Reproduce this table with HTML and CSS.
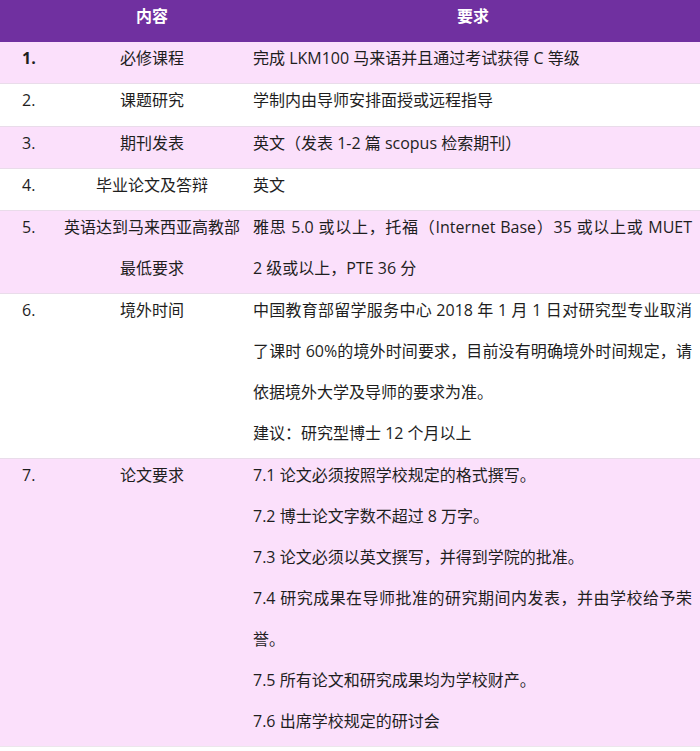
FILE: index.html
```html
<!DOCTYPE html>
<html lang="zh-CN">
<head>
<meta charset="utf-8">
<title>要求</title>
<link rel="stylesheet" href="styles.css">
</head>
<body>
<table class="req">
  <colgroup>
    <col class="c-num">
    <col class="c-item">
    <col class="c-desc">
  </colgroup>
  <thead>
    <tr class="head">
      <th></th>
      <th><div class="t">内容</div></th>
      <th><div class="t">要求</div></th>
    </tr>
  </thead>
  <tbody>
    <tr class="pink">
      <td class="num"><div class="t strong">1.</div></td>
      <td class="item"><div class="t">必修课程</div></td>
      <td class="desc"><div class="t">完成 LKM100 马来语并且通过考试获得 C 等级</div></td>
    </tr>
    <tr class="white">
      <td class="num"><div class="t">2.</div></td>
      <td class="item"><div class="t">课题研究</div></td>
      <td class="desc"><div class="t">学制内由导师安排面授或远程指导</div></td>
    </tr>
    <tr class="pink">
      <td class="num"><div class="t">3.</div></td>
      <td class="item"><div class="t">期刊发表</div></td>
      <td class="desc"><div class="t">英文（发表 1-2 篇 scopus 检索期刊）</div></td>
    </tr>
    <tr class="white">
      <td class="num"><div class="t">4.</div></td>
      <td class="item"><div class="t">毕业论文及答辩</div></td>
      <td class="desc"><div class="t">英文</div></td>
    </tr>
    <tr class="pink">
      <td class="num"><div class="t">5.</div></td>
      <td class="item"><div class="t">英语达到马来西亚高教部最低要求</div></td>
      <td class="desc"><div class="t">雅思 5.0 或以上，托福（Internet Base）35 或以上或 MUET <span class="nw">2 级</span>或以上，PTE 36 分</div></td>
    </tr>
    <tr class="white">
      <td class="num"><div class="t">6.</div></td>
      <td class="item"><div class="t">境外时间</div></td>
      <td class="desc"><div class="t">
        <p>中国教育部留学服务中心 2018 年 1 月 1 日对研究型专业取消了课时 60%的境外时间要求，目前没有明确境外时间规定，请依据境外大学及导师的要求为准。</p>
        <p>建议：研究型博士 12 个月以上</p>
      </div></td>
    </tr>
    <tr class="pink last">
      <td class="num"><div class="t">7.</div></td>
      <td class="item"><div class="t">论文要求</div></td>
      <td class="desc"><div class="t">
        <p>7.1 论文必须按照学校规定的格式撰写。</p>
        <p>7.2 博士论文字数不超过 8 万字。</p>
        <p>7.3 论文必须以英文撰写，并得到学院的批准。</p>
        <p>7.4 研究成果在导师批准的研究期间内发表，并由学校给予荣誉。</p>
        <p>7.5 所有论文和研究成果均为学校财产。</p>
        <p>7.6 出席学校规定的研讨会</p>
      </div></td>
    </tr>
  </tbody>
</table>
</body>
</html>
```
FILE: styles.css
```css
html, body {
  margin: 0;
  padding: 0;
  background: #ffffff;
}

body {
  font-family: "Open Sans", "Noto Sans CJK SC", sans-serif;
  font-size: 16px;
  color: #1e1e1e;
}

.req {
  width: 700px;
  border-collapse: collapse;
  table-layout: fixed;
}

.c-num { width: 58px; }
.c-item { width: 188px; }
.c-desc { width: 454px; }

.req th,
.req td {
  padding: 0;
  vertical-align: top;
  line-height: 41px;
}

.t {
  margin-top: -4px;
  padding-bottom: 4px;
}

.t p {
  margin: 0;
}

.nw {
  white-space: nowrap;
}

.head {
  background: #7030a0;
  color: #ffffff;
}

.head th {
  height: 42px;
  font-weight: 700;
  font-size: 16px;
  text-align: center;
  line-height: 42px;
}

.head .t {
  margin-top: -5px;
  padding-bottom: 5px;
}

.pink { background: #fbe0fb; }
.white { background: #ffffff; }

.req tbody tr {
  border-bottom: 1px solid #e9dcea;
}

.req tbody tr.last {
  border-bottom: 1px solid #ece6ec;
}

.req tbody tr:nth-child(2) td {
  height: 42px;
}

.num {
  padding-left: 22px !important;
}

.strong {
  font-weight: 700;
}

.item {
  text-align: center;
}

.desc {
  padding: 0 8px 0 7px !important;
  text-align: justify;
}
```
